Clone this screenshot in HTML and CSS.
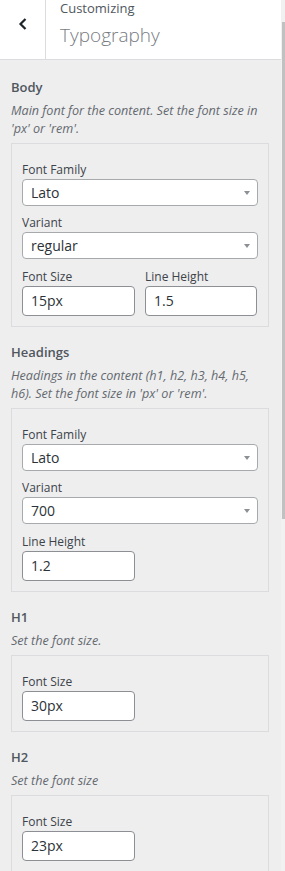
FILE: index.html
```html
<!DOCTYPE html>
<html lang="en">
<head>
    <meta charset="UTF-8">
    <meta name="viewport" content="width=device-width, initial-scale=1.0">
    <title>Customizing Typography</title>
    <link rel="stylesheet" href="styles.css">
</head>
<body>
    <div class="panel">
        <div class="panel-header">
            <div class="back-button">
                <svg width="10" height="14" viewBox="0 0 10 14"><polyline points="7.5,2 2.5,7 7.5,12" fill="none" stroke="#1d2327" stroke-width="2.2"/></svg>
            </div>
            <div class="panel-title">
                <span class="customizing">Customizing</span>
                <span class="section-name">Typography</span>
            </div>
        </div>

        <div class="control">
            <div class="control-title">Body</div>
            <div class="control-desc">Main font for the content. Set the font size in 'px' or 'rem'.</div>
            <div class="control-box">
                <div class="field">
                    <label>Font Family</label>
                    <div class="select">Lato</div>
                </div>
                <div class="field">
                    <label>Variant</label>
                    <div class="select">regular</div>
                </div>
                <div class="field-row">
                    <div class="field">
                        <label>Font Size</label>
                        <div class="text-input">15px</div>
                    </div>
                    <div class="field">
                        <label>Line Height</label>
                        <div class="text-input">1.5</div>
                    </div>
                </div>
            </div>
        </div>

        <div class="control">
            <div class="control-title">Headings</div>
            <div class="control-desc">Headings in the content (h1, h2, h3, h4, h5, h6). Set the font size in 'px' or 'rem'.</div>
            <div class="control-box">
                <div class="field">
                    <label>Font Family</label>
                    <div class="select">Lato</div>
                </div>
                <div class="field">
                    <label>Variant</label>
                    <div class="select">700</div>
                </div>
                <div class="field-row">
                    <div class="field">
                        <label>Line Height</label>
                        <div class="text-input">1.2</div>
                    </div>
                </div>
            </div>
        </div>

        <div class="control">
            <div class="control-title">H1</div>
            <div class="control-desc">Set the font size.</div>
            <div class="control-box">
                <div class="field-row">
                    <div class="field">
                        <label>Font Size</label>
                        <div class="text-input">30px</div>
                    </div>
                </div>
            </div>
        </div>

        <div class="control">
            <div class="control-title">H2</div>
            <div class="control-desc">Set the font size</div>
            <div class="control-box">
                <div class="field-row">
                    <div class="field">
                        <label>Font Size</label>
                        <div class="text-input">23px</div>
                    </div>
                </div>
            </div>
        </div>
    </div>

    <div class="scrollbar">
        <div class="scrollbar-thumb"></div>
    </div>
</body>
</html>
```

FILE: styles.css
```css
body {
    margin: 0;
    padding: 0;
    display: flex;
    height: 871px;
    overflow: hidden;
    background: #eeeeee;
    font-family: 'Open Sans', 'Noto Sans', sans-serif;
    color: #50575e;
}

.panel {
    width: 281px;
    flex-shrink: 0;
}

.panel-header {
    display: flex;
    height: 59px;
    background: #fff;
    border-bottom: 1px solid #dcdcde;
}

.back-button {
    width: 46px;
    border-right: 1px solid #dcdcde;
    display: flex;
    align-items: center;
    justify-content: center;
    padding-bottom: 12px;
    box-sizing: border-box;
}

.panel-title {
    display: flex;
    flex-direction: column;
    padding-left: 14px;
}

.customizing {
    font-size: 13px;
    line-height: 16px;
    color: #50575e;
}

.section-name {
    margin-top: 5px;
    font-size: 19px;
    line-height: 28px;
    font-weight: 300;
    color: #787c82;
}

.control {
    padding: 0 12px 0 11px;
    margin-top: 17px;
}

.control + .control {
    margin-top: 15px;
}

.control-title {
    font-size: 13px;
    line-height: 20px;
    font-weight: 600;
    color: #50575e;
}

.control-desc {
    margin-top: 5px;
    font-size: 12.6px;
    line-height: 18px;
    font-style: italic;
    color: #646970;
}

.control-box {
    display: flex;
    flex-direction: column;
    gap: 9px;
    margin-top: 5px;
    border: 1px solid #dcdcde;
    padding: 18px 10px 10px;
}

.field {
    display: flex;
    flex-direction: column;
}

.field label {
    font-size: 12px;
    line-height: 16px;
    color: #3c434a;
    margin-bottom: 1px;
}

.select {
    position: relative;
    height: 27px;
    box-sizing: border-box;
    border: 1px solid #a7aaad;
    border-radius: 4px;
    background: #fff;
    padding: 0 24px 0 8px;
    font-size: 14px;
    line-height: 25px;
    color: #2c3338;
}

.select::after {
    content: "";
    position: absolute;
    right: 7px;
    top: 11px;
    border-left: 3.5px solid transparent;
    border-right: 3.5px solid transparent;
    border-top: 4px solid #8c8f94;
}

.field-row {
    display: grid;
    grid-template-columns: 113px 112px;
    gap: 10px;
    margin-top: 1px;
}

.control-box > .field-row:first-child {
    margin-top: 0;
}

.text-input {
    height: 30px;
    box-sizing: border-box;
    border: 1px solid #8c8f94;
    border-radius: 4px;
    background: #fff;
    padding: 0 8px;
    font-size: 14px;
    line-height: 28px;
    color: #2c3338;
}

.scrollbar {
    width: 4px;
    background: #f1f1f1;
}

.scrollbar-thumb {
    margin-top: 22px;
    margin-left: 1px;
    width: 3px;
    height: 497px;
    background: #c1c1c1;
}
```
